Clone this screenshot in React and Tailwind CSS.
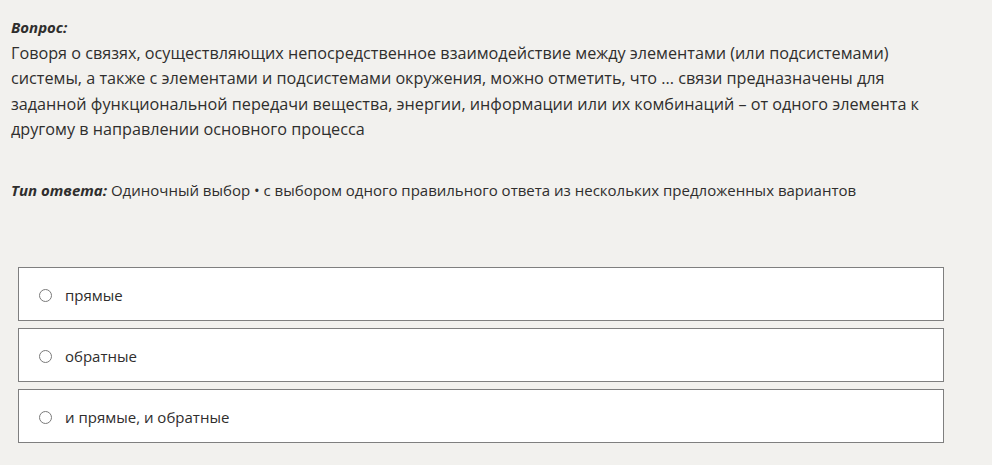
export default function App() {
  const options = ['прямые', 'обратные', 'и прямые, и обратные'];

  return (
    <div className="min-h-screen bg-[#f2f1ee] px-[11px] pt-[15px] text-[15px] leading-[25.6px] text-[#2f2e2d] font-['Open_Sans',sans-serif]">
      {/* Question */}
      <div className="font-bold italic">Вопрос:</div>
      <p className="w-[945px] text-[16.2px]">
        Говоря о связях, осуществляющих непосредственное взаимодействие между элементами (или подсистемами)
        системы, а также с элементами и подсистемами окружения, можно отметить, что ... связи предназначены для
        заданной функциональной передачи вещества, энергии, информации или их комбинаций – от одного элемента к
        другому в направлении основного процесса
      </p>

      <p className="mt-[35px]">
        <span className="font-bold italic">Тип ответа:</span> Одиночный выбор • с выбором одного правильного ответа из
        нескольких предложенных вариантов
      </p>

      {/* Options */}
      <div className="mt-[63px] ml-[7px] flex w-[926px] flex-col gap-[7px]">
        {options.map((opt, i) => (
          <label
            key={i}
            className="flex h-[54px] items-center gap-[13px] border border-[#7f7f7f] bg-white pl-[20px] pt-[4px]"
          >
            <span className="h-[13px] w-[13px] rounded-full border-[1.5px] border-[#7a7a7a] bg-white"></span>
            <span>{opt}</span>
          </label>
        ))}
      </div>
    </div>
  );
}
